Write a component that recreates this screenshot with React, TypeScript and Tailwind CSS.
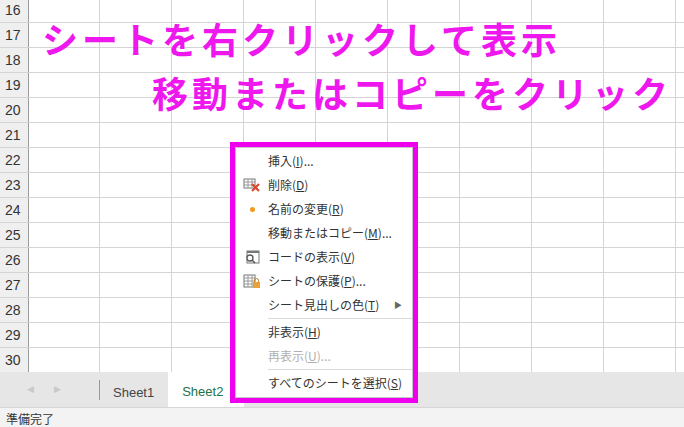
import React from "react";

const rows = [16,17,18,19,20,21,22,23,24,25,26,27,28,29,30];
const cols = Array.from({ length: 9 });
const font = { fontFamily: '"Noto Sans CJK JP", "Noto Sans", sans-serif' };

function Item({ icon, label, ul, rest, disabled, arrow }: any) {
  return (
    <div className="h-[24px] flex items-center relative">
      <div className="w-[32px] flex justify-center items-center">{icon}</div>
      <span className={`text-[12px] ${disabled ? "text-[#b0b0b0]" : "text-[#333]"}`}>
        {label}(<span className="underline">{ul}</span>){rest}
      </span>
      {arrow && <span className="absolute right-[10px] text-[8px] text-[#666]">▶</span>}
    </div>
  );
}

export default function App() {
  return (
    <div className="w-[684px] h-[427px] relative overflow-hidden bg-white" style={font}>
      <div className="flex flex-col">
        {rows.map((r, i) => (
          <div key={r} className={`flex ${i === 0 ? "h-[23px]" : "h-[25px]"} border-b border-[#d4d4d4]`}>
            <div className="w-[29px] shrink-0 bg-[#efefef] border-r border-[#9b9b9b] text-[14px] text-[#333] flex items-end pb-[1px] pl-[5px]" style={{ fontFamily: '"Liberation Sans", sans-serif' }}>{r}</div>
            <div className="w-[71px] shrink-0 border-r border-[#d4d4d4]" />
            {cols.map((_, j) => <div key={j} className="w-[72px] shrink-0 border-r border-[#d4d4d4]" />)}
          </div>
        ))}
      </div>
      <div className="absolute top-[372px] left-0 w-full h-[35px] bg-[#e6e6e6] flex items-start text-[13px]" style={{ fontFamily: '"Liberation Sans", sans-serif' }}>
        <span className="ml-[27px] mt-[11px] text-[#c8c8c8] text-[9px]">◀</span>
        <span className="ml-[20px] mt-[11px] text-[#c8c8c8] text-[9px]">▶</span>
        <div className="ml-[38px] mt-[8px] w-px h-[20px] bg-[#999]" />
        <div className="ml-[13px] mt-[11px] text-[#444]">Sheet1</div>
        <div className="ml-[14px] h-[25px] w-[62px] bg-white border-b-2 border-[#217346] text-[#217346] pl-[14px] pt-[10px] box-content">Sheet2</div>
      </div>
      <div className="absolute top-[407px] left-0 w-full h-[20px] bg-[#f3f3f3] border-t border-[#d6d6d6] text-[12px] text-[#333] pl-[6px] pt-[2px]">準備完了</div>

      <div className="absolute left-[42px] top-[20px] text-[36px] font-bold text-[#ee18ee] tracking-[4px] leading-none" style={{ fontFamily: '"Noto Sans CJK JP", sans-serif' }}>シートを右クリックして表示</div>
      <div className="absolute left-[152px] top-[74px] text-[36px] font-bold text-[#ee18ee] tracking-[4px] leading-none" style={{ fontFamily: '"Noto Sans CJK JP", sans-serif' }}>移動またはコピーをクリック</div>

      <div className="absolute left-[230px] top-[142px] w-[188px] h-[261px] border-[5px] border-[#ee00ee] bg-white">
        <div className="border border-[#c6c6c6] h-full pt-[1px]">
          <Item label="挿入" ul="I" rest="..." />
          <Item label="削除" ul="D" icon={
            <svg width="18" height="14" viewBox="0 0 18 14"><rect x="1" y="1" width="11" height="9" fill="none" stroke="#777" /><path d="M1 4h11M1 7h11M5 1v9M9 1v9" stroke="#999" /><path d="M9 6l7 7M16 6l-7 7" stroke="#d9452b" strokeWidth="2" /></svg>} />
          <Item label="名前の変更" ul="R" icon={<div className="w-[5px] h-[5px] rounded-full bg-[#f39a1e]" />} />
          <Item label="移動またはコピー" ul="M" rest="..." />
          <Item label="コードの表示" ul="V" icon={
            <svg width="16" height="14" viewBox="0 0 16 14"><rect x="3" y="1" width="12" height="12" fill="none" stroke="#777" /><rect x="3" y="1" width="12" height="2" fill="#777" /><circle cx="6" cy="8" r="3" fill="white" stroke="#555" strokeWidth="1.3" /><path d="M8 10l3 3" stroke="#555" strokeWidth="1.5" /></svg>} />
          <Item label="シートの保護" ul="P" rest="..." icon={
            <svg width="18" height="15" viewBox="0 0 18 15"><rect x="1" y="1" width="11" height="12" fill="none" stroke="#777" /><path d="M1 4h11M1 7h11M1 10h11M5 1v12M9 1v12" stroke="#999" /><rect x="10" y="8" width="7" height="6" fill="#e8a23a" /><path d="M11.5 8V6.5a2 2 0 014 0V8" stroke="#c08020" fill="none" /></svg>} />
          <Item label="シート見出しの色" ul="T" arrow />
          <div className="ml-[32px] h-px bg-[#dadada] my-[1px]" />
          <Item label="非表示" ul="H" />
          <Item label="再表示" ul="U" rest="..." disabled />
          <div className="ml-[32px] h-px bg-[#dadada] my-[1px]" />
          <Item label="すべてのシートを選択" ul="S" />
        </div>
      </div>
    </div>
  );
}
